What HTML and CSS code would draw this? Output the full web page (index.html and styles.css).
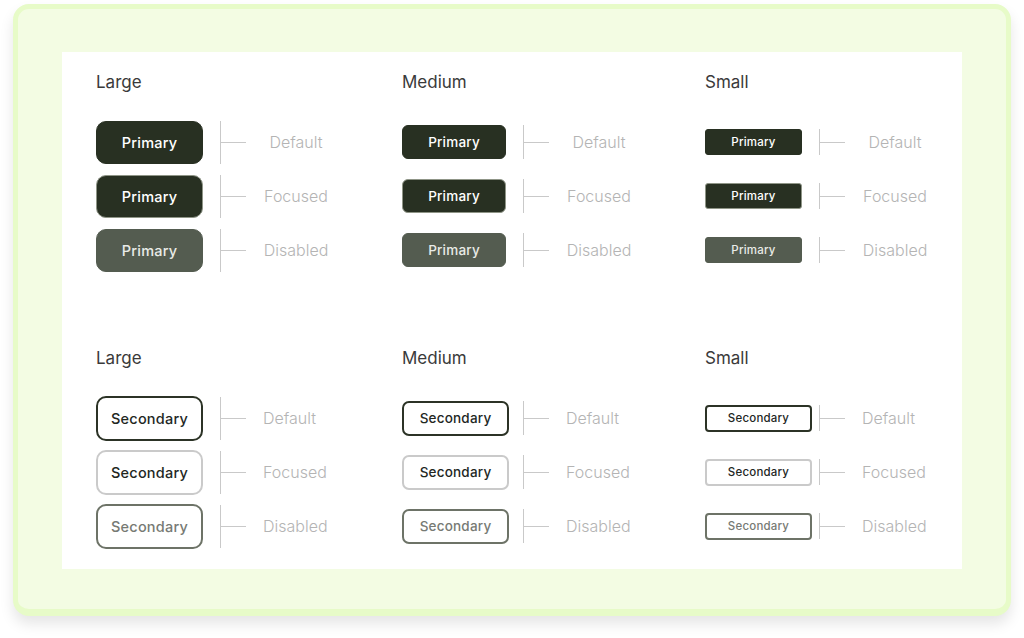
FILE: index.html
```html
<!DOCTYPE html>
<html lang="en">
<head>
<meta charset="utf-8">
<title>Buttons</title>
<link rel="stylesheet" href="styles.css">
</head>
<body>
<div class="card">
  <div class="sheet">
    <section class="group primary-group">
      <div class="col col-lg">
        <h3 class="size">Large</h3>
        <div class="row"><div class="slot"><button class="btn btn-primary">Primary</button></div><span class="link"></span><span class="state">Default</span></div>
        <div class="row"><div class="slot"><button class="btn btn-primary is-focused">Primary</button></div><span class="link"></span><span class="state">Focused</span></div>
        <div class="row"><div class="slot"><button class="btn btn-primary is-disabled">Primary</button></div><span class="link"></span><span class="state">Disabled</span></div>
      </div>
      <div class="col col-md">
        <h3 class="size">Medium</h3>
        <div class="row"><div class="slot"><button class="btn btn-primary">Primary</button></div><span class="link"></span><span class="state">Default</span></div>
        <div class="row"><div class="slot"><button class="btn btn-primary is-focused">Primary</button></div><span class="link"></span><span class="state">Focused</span></div>
        <div class="row"><div class="slot"><button class="btn btn-primary is-disabled">Primary</button></div><span class="link"></span><span class="state">Disabled</span></div>
      </div>
      <div class="col col-sm">
        <h3 class="size">Small</h3>
        <div class="row"><div class="slot"><button class="btn btn-primary">Primary</button></div><span class="link"></span><span class="state">Default</span></div>
        <div class="row"><div class="slot"><button class="btn btn-primary is-focused">Primary</button></div><span class="link"></span><span class="state">Focused</span></div>
        <div class="row"><div class="slot"><button class="btn btn-primary is-disabled">Primary</button></div><span class="link"></span><span class="state">Disabled</span></div>
      </div>
    </section>

    <section class="group secondary-group">
      <div class="col col-lg">
        <h3 class="size">Large</h3>
        <div class="row"><div class="slot"><button class="btn btn-secondary">Secondary</button></div><span class="link"></span><span class="state">Default</span></div>
        <div class="row"><div class="slot"><button class="btn btn-secondary is-focused">Secondary</button></div><span class="link"></span><span class="state">Focused</span></div>
        <div class="row"><div class="slot"><button class="btn btn-secondary is-disabled">Secondary</button></div><span class="link"></span><span class="state">Disabled</span></div>
      </div>
      <div class="col col-md">
        <h3 class="size">Medium</h3>
        <div class="row"><div class="slot"><button class="btn btn-secondary">Secondary</button></div><span class="link"></span><span class="state">Default</span></div>
        <div class="row"><div class="slot"><button class="btn btn-secondary is-focused">Secondary</button></div><span class="link"></span><span class="state">Focused</span></div>
        <div class="row"><div class="slot"><button class="btn btn-secondary is-disabled">Secondary</button></div><span class="link"></span><span class="state">Disabled</span></div>
      </div>
      <div class="col col-sm">
        <h3 class="size">Small</h3>
        <div class="row"><div class="slot"><button class="btn btn-secondary">Secondary</button></div><span class="link"></span><span class="state">Default</span></div>
        <div class="row"><div class="slot"><button class="btn btn-secondary is-focused">Secondary</button></div><span class="link"></span><span class="state">Focused</span></div>
        <div class="row"><div class="slot"><button class="btn btn-secondary is-disabled">Secondary</button></div><span class="link"></span><span class="state">Disabled</span></div>
      </div>
    </section>
  </div>
</div>
</body>
</html>
```

FILE: styles.css
```css
* { box-sizing: border-box; }

html, body {
  margin: 0;
  background: #ffffff;
}

body {
  font-family: "Inter", "Liberation Sans", sans-serif;
  width: 1024px;
  height: 638px;
  overflow: hidden;
  padding: 4px 13px 0;
}

/* Pale green frame around the sheet */
.card {
  width: 998px;
  height: 612px;
  background: #f3fce3;
  border: 5px solid #e7fbc8;
  border-bottom-width: 7px;
  border-radius: 16px;
  padding: 43px 44px 0;
  box-shadow: 0 8px 14px rgba(0, 0, 0, 0.10);
}

.sheet {
  width: 900px;
  height: 517px;
  background: #ffffff;
  padding: 20px 0 0 34px;
}

.group {
  display: grid;
  grid-template-columns: 306px 303px 1fr;
}

.secondary-group {
  margin-top: 71px;
}

.size {
  margin: 0 0 23px;
  font-size: 17px;
  line-height: 20px;
  font-weight: 400;
  color: #3a3a3a;
}

.row {
  display: flex;
  align-items: center;
  height: 54px;
}

.col-lg .slot { width: 124px; }
.col-md .slot { width: 121px; }
.col-sm .slot { width: 114px; }

.slot {
  display: flex;
  align-items: center;
}

/* Connector between a button and its state label */
.link {
  position: relative;
  width: 26px;
  border-left: 1px solid #c9c9c9;
}

.link::after {
  content: "";
  position: absolute;
  left: 0;
  top: 50%;
  width: 25px;
  height: 1px;
  background: #c9c9c9;
}

.col-lg .link { height: 43px; }
.col-md .link { height: 34px; }
.col-sm .link { height: 26px; }

.state {
  margin-left: 17px;
  font-size: 16px;
  font-weight: 300;
  color: #b4b4b4;
  white-space: nowrap;
}

.primary-group .state {
  width: 66px;
  text-align: center;
}

/* Buttons */
.btn {
  display: inline-flex;
  align-items: center;
  justify-content: center;
  padding: 0;
  font-family: inherit;
  font-weight: 500;
  letter-spacing: 0.2px;
  cursor: default;
}

.btn-primary {
  background: #283022;
  color: #ffffff;
  border: 1px solid #283022;
}

.btn-primary.is-focused {
  border-color: #8f9587;
}

.btn-primary.is-disabled {
  background: #545c50;
  border-color: #545c50;
  color: #e9ebe7;
}

.btn-secondary {
  background: #ffffff;
  color: #23271f;
  border: 2px solid #2c3326;
}

.btn-secondary.is-focused {
  border-color: #cacaca;
}

.btn-secondary.is-disabled {
  border-color: #6d7367;
  color: #777a74;
}

.col-lg .btn {
  width: 107px;
  height: 43px;
  border-radius: 10px;
  font-size: 14.5px;
}

.col-lg .btn-secondary { height: 45px; }

.col-md .btn {
  width: 104px;
  height: 34px;
  border-radius: 6px;
  font-size: 13.5px;
}

.col-md .btn-secondary {
  width: 107px;
  height: 35px;
  border-radius: 7px;
}

.col-sm .btn {
  width: 97px;
  height: 26px;
  border-radius: 3px;
  font-size: 11.5px;
}

.col-sm .btn-secondary {
  width: 107px;
  height: 27px;
  border-radius: 4px;
}
```
